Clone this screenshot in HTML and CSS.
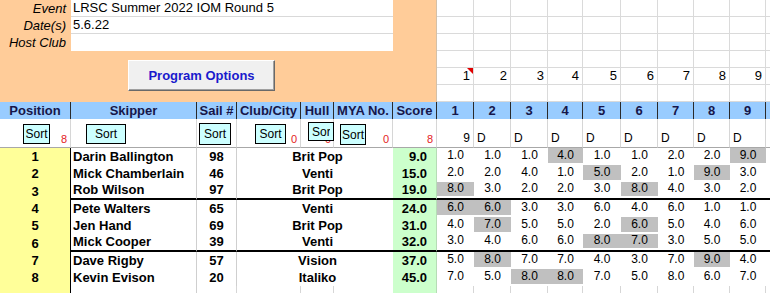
FILE: index.html
```html
<!DOCTYPE html>
<html lang="en">
  <head>
    <meta charset="UTF-8" />
    <meta name="viewport" content="width=device-width, initial-scale=1.0" />
    <title>IOM Results</title>
    <link rel="stylesheet" href="styles.css">
  </head>
  <body>
    <div class="sheet">
      <!-- event details -->
      <div class="row">
        <div class="label">Event</div>
        <div class="field">LRSC Summer 2022 IOM Round 5</div>
        <div class="pad"></div>
        <div class="g"></div><div class="g"></div><div class="g"></div><div class="g"></div><div class="g"></div>
        <div class="g"></div><div class="g"></div><div class="g"></div><div class="g"></div><div class="g"></div>
      </div>
      <div class="row">
        <div class="label">Date(s)</div>
        <div class="field">5.6.22</div>
        <div class="pad"></div>
        <div class="g"></div><div class="g"></div><div class="g"></div><div class="g"></div><div class="g"></div>
        <div class="g"></div><div class="g"></div><div class="g"></div><div class="g"></div><div class="g"></div>
      </div>
      <div class="row">
        <div class="label">Host Club</div>
        <div class="field last"></div>
        <div class="pad"></div>
        <div class="g"></div><div class="g"></div><div class="g"></div><div class="g"></div><div class="g"></div>
        <div class="g"></div><div class="g"></div><div class="g"></div><div class="g"></div><div class="g"></div>
      </div>
      <div class="row">
        <div class="panel"><button class="options">Program Options</button></div>
        <div class="g"></div><div class="g"></div><div class="g"></div><div class="g"></div><div class="g"></div>
        <div class="g"></div><div class="g"></div><div class="g"></div><div class="g"></div><div class="g"></div>
      </div>
      <div class="row">
        <div class="g num note">1</div><div class="g num">2</div><div class="g num">3</div>
        <div class="g num">4</div><div class="g num">5</div><div class="g num">6</div>
        <div class="g num">7</div><div class="g num">8</div><div class="g num">9</div>
        <div class="g"></div>
      </div>
      <div class="row">
        <div class="g"></div><div class="g"></div><div class="g"></div><div class="g"></div><div class="g"></div>
        <div class="g"></div><div class="g"></div><div class="g"></div><div class="g"></div><div class="g"></div>
      </div>

      <!-- column headings -->
      <div class="row head">
        <div>Position</div><div>Skipper</div><div>Sail #</div><div>Club/City</div>
        <div>Hull</div><div>MYA No.</div><div>Score</div>
        <div>1</div><div>2</div><div>3</div><div>4</div><div>5</div>
        <div>6</div><div>7</div><div>8</div><div>9</div><div></div>
      </div>

      <!-- sort buttons -->
      <div class="row sorts">
        <div><span class="count">8</span><button class="sort sort-pos">Sort</button></div>
        <div><button class="sort sort-skip">Sort</button></div>
        <div><button class="sort sort-sail">Sort</button></div>
        <div><span class="count">0</span><button class="sort sort-club">Sort</button></div>
        <div><span class="count">0</span><button class="sort sort-hull"><span>Sort</span></button></div>
        <div><span class="count">0</span><button class="sort sort-mya">Sort</button></div>
        <div><span class="count">8</span></div>
        <div class="races">9</div>
        <div class="flag">D</div><div class="flag">D</div><div class="flag">D</div><div class="flag">D</div>
        <div class="flag">D</div><div class="flag">D</div><div class="flag">D</div><div class="flag">D</div>
        <div></div>
      </div>

      <!-- results -->
      <div class="row">
        <div class="pos">1</div><div class="name">Darin Ballington</div><div class="sail">98</div>
        <div></div><div class="hull">Brit Pop</div><div></div><div class="score">9.0</div>
        <div class="r">1.0</div><div class="r">1.0</div><div class="r">1.0</div><div class="r x">4.0</div>
        <div class="r">1.0</div><div class="r">1.0</div><div class="r">2.0</div><div class="r">2.0</div>
        <div class="r x">9.0</div><div></div>
      </div>
      <div class="row">
        <div class="pos">2</div><div class="name">Mick Chamberlain</div><div class="sail">46</div>
        <div></div><div class="hull">Venti</div><div></div><div class="score">15.0</div>
        <div class="r">2.0</div><div class="r">2.0</div><div class="r">4.0</div><div class="r">1.0</div>
        <div class="r x">5.0</div><div class="r">2.0</div><div class="r">1.0</div><div class="r x">9.0</div>
        <div class="r">3.0</div><div></div>
      </div>
      <div class="row cut">
        <div class="pos">3</div><div class="name">Rob Wilson</div><div class="sail">97</div>
        <div></div><div class="hull">Brit Pop</div><div></div><div class="score">19.0</div>
        <div class="r x">8.0</div><div class="r">3.0</div><div class="r">2.0</div><div class="r">2.0</div>
        <div class="r">3.0</div><div class="r x">8.0</div><div class="r">4.0</div><div class="r">3.0</div>
        <div class="r">2.0</div><div></div>
      </div>
      <div class="row">
        <div class="pos">4</div><div class="name">Pete Walters</div><div class="sail">65</div>
        <div></div><div class="hull">Venti</div><div></div><div class="score">24.0</div>
        <div class="r x">6.0</div><div class="r x">6.0</div><div class="r">3.0</div><div class="r">3.0</div>
        <div class="r">6.0</div><div class="r">4.0</div><div class="r">6.0</div><div class="r">1.0</div>
        <div class="r">1.0</div><div></div>
      </div>
      <div class="row">
        <div class="pos">5</div><div class="name">Jen Hand</div><div class="sail">69</div>
        <div></div><div class="hull">Brit Pop</div><div></div><div class="score">31.0</div>
        <div class="r">4.0</div><div class="r x">7.0</div><div class="r">5.0</div><div class="r">5.0</div>
        <div class="r">2.0</div><div class="r x">6.0</div><div class="r">5.0</div><div class="r">4.0</div>
        <div class="r">6.0</div><div></div>
      </div>
      <div class="row cut">
        <div class="pos">6</div><div class="name">Mick Cooper</div><div class="sail">39</div>
        <div></div><div class="hull">Venti</div><div></div><div class="score">32.0</div>
        <div class="r">3.0</div><div class="r">4.0</div><div class="r">6.0</div><div class="r">6.0</div>
        <div class="r x">8.0</div><div class="r x">7.0</div><div class="r">3.0</div><div class="r">5.0</div>
        <div class="r">5.0</div><div></div>
      </div>
      <div class="row">
        <div class="pos">7</div><div class="name">Dave Rigby</div><div class="sail">57</div>
        <div></div><div class="hull">Vision</div><div></div><div class="score">37.0</div>
        <div class="r">5.0</div><div class="r x">8.0</div><div class="r">7.0</div><div class="r">7.0</div>
        <div class="r">4.0</div><div class="r">3.0</div><div class="r">7.0</div><div class="r x">9.0</div>
        <div class="r">4.0</div><div></div>
      </div>
      <div class="row">
        <div class="pos">8</div><div class="name">Kevin Evison</div><div class="sail">20</div>
        <div></div><div class="hull">Italiko</div><div></div><div class="score">45.0</div>
        <div class="r">7.0</div><div class="r">5.0</div><div class="r x">8.0</div><div class="r x">8.0</div>
        <div class="r">7.0</div><div class="r">5.0</div><div class="r">8.0</div><div class="r">6.0</div>
        <div class="r">7.0</div><div></div>
      </div>
      <div class="row empty">
        <div class="pos"></div><div class="name"></div><div class="sail"></div><div></div>
        <div></div><div></div><div class="score"></div>
        <div></div><div></div><div></div><div></div><div></div>
        <div></div><div></div><div></div><div></div><div></div>
      </div>
    </div>
  </body>
</html>
```

FILE: styles.css
```css
html,
body {
  margin: 0;
  padding: 0;
  overflow: hidden;
  background-color: #fff;
}
body {
  font-family: "Liberation Sans", Arial, sans-serif;
  font-size: 13px;
  color: #000;
}
.sheet {
  display: grid;
  grid-template-columns: 71px 126px 40px 64px 33px 59px 44px 37px 37px 37px 35px 38px 37px 36px 36px 36px 10px;
  grid-template-rows: repeat(7, 17px) 29px 17px 17px 18px 17px 17px 18px 17px 17px 17px;
}
.row {
  display: contents;
}
.row > div {
  box-sizing: border-box;
  display: flex;
  align-items: flex-end;
  padding-bottom: 1px;
  line-height: 14px;
  white-space: nowrap;
}

/* event panel */
.label {
  background-color: #ffcc99;
  justify-content: flex-end;
  padding-right: 5px;
  font-style: italic;
}
.field {
  grid-column: span 5;
  background-color: #fff;
  padding-left: 2px;
  border-bottom: 1px solid #d9d9d9;
}
.field.last {
  border-bottom: none;
}
.pad {
  background-color: #ffcc99;
  border-right: 1px solid #d4c0a8;
}
.row > .panel {
  grid-column: span 7;
  grid-row: span 3;
  background-color: #ffcc99;
  border-right: 1px solid #d4c0a8;
  align-items: flex-start;
  padding: 9px 0 0 128px;
}
.options {
  width: 147px;
  height: 31px;
  padding: 0;
  background-color: #f0f0f0;
  border: 1px solid;
  border-color: #fff #696969 #696969 #fff;
  box-shadow: inset -1px -1px 0 #a0a0a0;
  font-family: "Liberation Sans", Arial, sans-serif;
  font-weight: bold;
  font-size: 13px;
  color: #1a1acc;
}
.g {
  border-right: 1px solid #dadada;
  border-bottom: 1px solid #dadada;
}
.row > .num {
  justify-content: flex-end;
  padding-right: 3px;
}
.note {
  position: relative;
}
.note::after {
  content: "";
  position: absolute;
  top: 0;
  right: 0;
  border-top: 6px solid #e00000;
  border-left: 6px solid transparent;
}

/* headings */
.head > div {
  background-color: #99ccff;
  border-right: 1px solid #2a2a2a;
  justify-content: center;
  font-weight: bold;
  color: #16164a;
}

/* sort row */
.sorts > div {
  display: grid;
  align-items: end;
  border-right: 1px solid #d6d6d6;
  border-bottom: 1px solid #a8a8a8;
  padding-bottom: 0;
}
.sort {
  grid-area: 1 / 1;
  align-self: start;
  justify-self: start;
  box-sizing: border-box;
  padding: 0;
  background-color: #ccffff;
  border: 1px solid #000;
  font-family: "Liberation Sans", Arial, sans-serif;
  font-size: 12px;
  color: #000;
  overflow: hidden;
}
.sort-pos {
  width: 27px;
  height: 20px;
  margin: 5px 0 0 23px;
}
.sort-skip {
  width: 40px;
  height: 20px;
  margin: 5px 0 0 15px;
}
.sort-sail {
  width: 32px;
  height: 22px;
  margin: 4px 0 0 2px;
}
.sort-club {
  width: 31px;
  height: 20px;
  margin: 5px 0 0 18px;
}
.sort-hull {
  width: 26px;
  height: 19px;
  margin: 3px 0 0 7px;
  text-align: left;
  padding-left: 3px;
}
.sort-hull span {
  display: block;
  width: 18px;
  overflow: hidden;
}
.sort-mya {
  width: 26px;
  height: 21px;
  margin: 5px 0 0 6px;
}
.count {
  grid-area: 1 / 1;
  justify-self: end;
  padding: 0 3px 2px 0;
  font-size: 11px;
  line-height: 12px;
  color: #e41b23;
}
.sorts > .races {
  justify-items: end;
  padding: 0 3px 2px 0;
  font-size: 12px;
}
.sorts > .flag {
  padding: 0 0 2px 3px;
  font-size: 12px;
}

/* results */
.pos {
  background-color: #ffff99;
  border-right: 1px solid #000;
  justify-content: center;
  font-weight: bold;
}
.name {
  padding-left: 2px;
  border-right: 1px solid #cfcfcf;
  font-weight: bold;
}
.sail {
  justify-content: center;
  border-right: 1px solid #cfcfcf;
  font-weight: bold;
}
.hull {
  justify-content: center;
  font-weight: bold;
}
.score {
  background-color: #ccffcc;
  border-right: 1px solid #b6dcb6;
  justify-content: flex-end;
  padding-right: 9px;
  font-weight: bold;
}
.row > .r {
  justify-content: center;
  padding-bottom: 3px;
  font-size: 12px;
  line-height: 13px;
}
.r.x {
  background-color: #c0c0c0;
  box-shadow: inset 0 -2px 0 #fff;
}
.cut > div:not(.pos) {
  border-bottom: 2px solid #000;
}
.empty > div:nth-child(n + 3):nth-child(-n + 5),
.empty > div:nth-child(n + 8) {
  border-right: 1px solid #d6d6d6;
}
```
